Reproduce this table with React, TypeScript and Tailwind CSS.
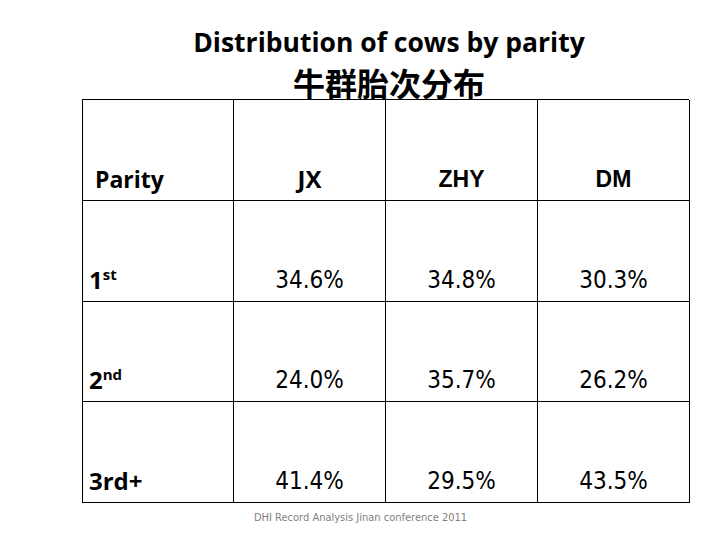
import React from "react";

const bold = { fontFamily: '"Open Sans", "Liberation Sans", sans-serif' };
const num = { fontFamily: '"DejaVu Sans Condensed", "DejaVu Sans", sans-serif' };

function Label({ main, sup }: { main: string; sup?: string }) {
  return (
    <span className="font-bold text-[24px] leading-none text-black" style={bold}>
      {main}
      {sup && <sup className="text-[15px] relative -top-[9px]">{sup}</sup>}
    </span>
  );
}

export default function App() {
  const rows = [
    { main: "1", sup: "st", v: ["34.6%", "34.8%", "30.3%"] },
    { main: "2", sup: "nd", v: ["24.0%", "35.7%", "26.2%"] },
    { main: "3rd+", v: ["41.4%", "29.5%", "43.5%"] },
  ];
  return (
    <div className="w-[720px] h-[540px] bg-white flex flex-col overflow-hidden">
      <div className="pt-[26px] flex flex-col items-center pl-[58px]">
        <div className="font-bold text-[26.5px] leading-[32px] text-black" style={bold}>
          Distribution of cows by parity
        </div>
        <div
          className="mt-[8px] text-[32px] leading-[32px] text-black font-bold"
          style={{ fontFamily: '"Noto Sans CJK SC", sans-serif' }}
        >
          牛群胎次分布
        </div>
      </div>
      <div className="ml-[82px] mt-[1px] w-[607px] grid grid-cols-[151px_152px_152px_152px] grid-rows-[101px_101px_100px_101px] border-l border-t border-black">
        <div className="border-r border-b border-black flex items-end pl-[12px] pb-[9px]">
          <span className="font-bold text-[23px] leading-none text-black" style={bold}>Parity</span>
        </div>
        <div className="border-r border-b border-black flex items-end justify-center pb-[9px]">
          <Label main="JX" />
        </div>
        <div className="border-r border-b border-black flex items-end justify-center pb-[9px]">
          <span className="font-bold text-[23px] leading-none" style={{ fontFamily: '"Liberation Sans", sans-serif' }}>ZHY</span>
        </div>
        <div className="border-r border-b border-black flex items-end justify-center pb-[9px]">
          <span className="font-bold text-[23px] leading-none" style={{ fontFamily: '"Liberation Sans", sans-serif' }}>DM</span>
        </div>
        {rows.map((r) => (
          <React.Fragment key={r.main}>
            <div className="border-r border-b border-black flex items-end pl-[6px] pb-[9px]">
              <Label main={r.main} sup={r.sup} />
            </div>
            {r.v.map((v, i) => (
              <div key={i} className="border-r border-b border-black flex items-end justify-center pb-[9px]">
                <span className="text-[24px] leading-none text-black" style={num}>{v}</span>
              </div>
            ))}
          </React.Fragment>
        ))}
      </div>
      <div className="pl-[254px] pt-0">
        <span className="text-[11px] leading-none text-[#808080]" style={{ fontFamily: '"DejaVu Sans Condensed", "DejaVu Sans", sans-serif' }}>
          DHI Record Analysis Jinan conference 2011
        </span>
      </div>
    </div>
  );
}
